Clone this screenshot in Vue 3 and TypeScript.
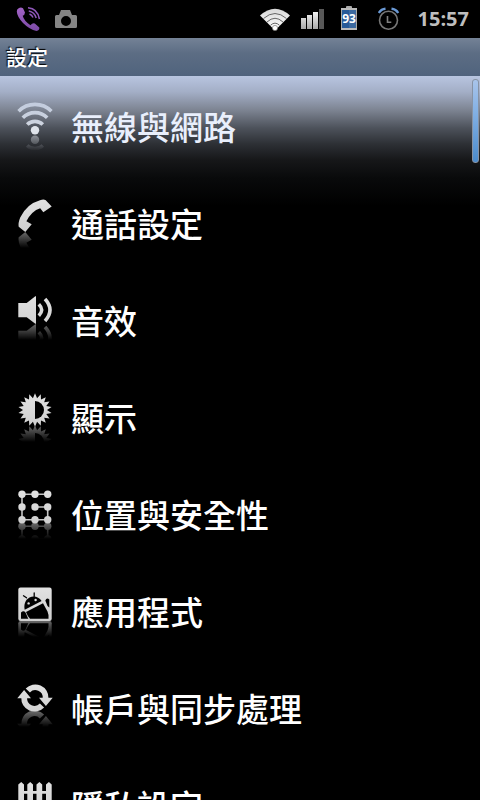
<script setup lang="ts">
interface SettingItem {
  icon: string
  label: string
  mirror: number
}

const items: SettingItem[] = [
  { icon: 'wireless', label: '無線與網路', mirror: 35 },
  { icon: 'call', label: '通話設定', mirror: 35 },
  { icon: 'sound', label: '音效', mirror: 30 },
  { icon: 'display', label: '顯示', mirror: 35 },
  { icon: 'security', label: '位置與安全性', mirror: 35 },
  { icon: 'apps', label: '應用程式', mirror: 36 },
  { icon: 'sync', label: '帳戶與同步處理', mirror: 29 },
  { icon: 'privacy', label: '隱私設定', mirror: 36 },
]

// Sun outline: alternating outer and inner points around the centre.
const rays = 18
const sunPoints = Array.from({ length: rays * 2 }, (_, i) => {
  const r = i % 2 === 0 ? 16.8 : 12
  const a = (i * Math.PI) / rays - Math.PI / 2
  return `${(18 + r * Math.cos(a)).toFixed(2)},${(19 + r * Math.sin(a)).toFixed(2)}`
}).join(' ')
</script>

<template>
  <div class="screen">
    <svg class="defs" aria-hidden="true">
      <defs>
        <linearGradient id="metal" gradientUnits="userSpaceOnUse" x1="0" y1="2" x2="0" y2="36">
          <stop offset="0" stop-color="#e2e2e2" />
          <stop offset="1" stop-color="#cfcfcf" />
        </linearGradient>
        <linearGradient id="frost" gradientUnits="userSpaceOnUse" x1="0" y1="2" x2="0" y2="36">
          <stop offset="0" stop-color="#c2ccde" />
          <stop offset="1" stop-color="#d4d8e0" />
        </linearGradient>
        <symbol id="icon-wireless" viewBox="0 0 36 54">
          <g fill="none" stroke="url(#frost)" stroke-width="3.6">
            <path d="M1.6 11.2A23 23 0 0 1 34.4 11.2" />
            <path d="M5.8 17.8A17 17 0 0 1 30.2 17.8" />
            <path d="M10.2 24.6A11 11 0 0 1 25.8 24.6" />
          </g>
          <circle cx="18" cy="30.3" r="4.2" fill="#dfe3ea" />
        </symbol>
        <symbol id="icon-call" viewBox="0 0 36 54">
          <path fill="url(#metal)" d="M23 3.2Q26.5 2 28.5 3L34.7 9.6L26.3 15.3L23.2 11.2Q14.5 14 9.4 24.3L14.7 27.3L8.3 35L1.7 29.7Q1 26 3.2 20.5Q9.5 7 23 3.2Z" />
        </symbol>
        <symbol id="icon-sound" viewBox="0 0 36 54">
          <path fill="url(#metal)" d="M1.3 9H9.7L18.3 2.3H19V29.7H18.3L9.7 23.3H1.3Z" />
          <g fill="none" stroke="url(#metal)" stroke-width="3.5">
            <path d="M21.8 10.3Q27.5 16 21.8 21.7" />
            <path d="M28 5Q38 16 28 27" />
          </g>
        </symbol>
        <symbol id="icon-display" viewBox="0 0 36 54">
          <polygon :points="sunPoints" fill="url(#metal)" />
          <path d="M18 10A9 9 0 0 1 18 28Z" fill="#000" />
        </symbol>
        <symbol id="icon-security" viewBox="0 0 36 54">
          <path d="M30.7 6.3H5V31.7H30.7V19H18" fill="none" stroke="#c4c4c4" stroke-width="1.6" />
          <g fill="url(#metal)">
            <circle cx="5" cy="6.3" r="3.7" /><circle cx="18" cy="6.3" r="3.7" /><circle cx="30.7" cy="6.3" r="3.7" />
            <circle cx="5" cy="19" r="3.7" /><circle cx="18" cy="19" r="3.7" /><circle cx="30.7" cy="19" r="3.7" />
            <circle cx="5" cy="31.7" r="3.7" /><circle cx="18" cy="31.7" r="3.7" /><circle cx="30.7" cy="31.7" r="3.7" />
          </g>
        </symbol>
        <symbol id="icon-apps" viewBox="0 0 36 54">
          <rect x="1.3" y="2.6" width="33.4" height="33.4" rx="2.2" fill="url(#metal)" />
          <path d="M7.7 24.8C6.500 19.5 8.5 14.5 12.5 12.5C17 10.3 22 12 24.600 16Z" />
          <path d="M9.5 12.8L6.500 10.8M17.2 11.5V8" fill="none" stroke="#000" stroke-width="1.3" stroke-linecap="round" />
          <circle cx="11.6" cy="18.4" r="1.2" fill="#dcdcdc" /><circle cx="18.6" cy="15" r="1.2" fill="#dcdcdc" />
          <path d="M9 26.9L26 18.2L30.5 26.5Q32 30 31.5 33.7H13Q10.5 31 9 26.9Z" />
          <path d="M4 33.7V27.500Q6.5 25 8.5 27.5L11.3 33.7Z" />
          <path d="M28.300 15.5Q29.8 12.2 32.3 14.5V22.5L30.5 21Z" />
        </symbol>
        <symbol id="icon-sync" viewBox="0 0 36 54">
          <g fill="none" stroke="url(#metal)" stroke-width="5.8">
            <path d="M10.800 8.600A10.300 10.300 0 0 1 28.600 16.300" />
            <path d="M25 23.400A10.300 10.300 0 0 1 7.200 15.700" />
          </g>
          <path fill="url(#metal)" d="M22 15.8H35.7L28.9 24Z M.3 16.2H14L7.1 8Z" />
        </symbol>
        <symbol id="icon-privacy" viewBox="0 0 36 54">
          <path fill="url(#metal)" d="M1.3 36V5.5L4.2 3L7 5.5V36Z M10.3 36V5.5L13.2 3L16 5.5V36Z M19.5 36V5.5L22.4 3L25.2 5.5V36Z M29 36V5.5L31.9 3L34.7 5.5V36Z M2 12H34V14.7H2Z M2 26H34V29H2Z" />
        </symbol>
      </defs>
    </svg>

    <header class="status">
      <div class="group notices">
        <svg width="26" height="38" viewBox="0 0 26 38" aria-hidden="true">
          <defs>
            <linearGradient id="violet" x1="0" y1="0" x2="0" y2="1">
              <stop offset="0" stop-color="#a263c6" /><stop offset="1" stop-color="#7b4aa5" />
            </linearGradient>
          </defs>
          <path fill="url(#violet)" d="M1.2 9.5Q4 6.5 7 8.2L9 12.5Q8.8 15 6.7 15.8Q8 21 14.5 25.3Q16.5 22.7 18.8 23.6L23.3 27.5Q23.8 30 20.5 31Q13.5 29.5 7 23Q1 16.5.8 11.5Z" />
          <g fill="none" stroke="#9058ba" stroke-width="1.5">
            <path d="M12 7.8Q21.5 8.5 23.4 19" /><path d="M12.8 11Q18.5 12 20.2 18" /><path d="M13.5 14Q16 15 17 17.5" />
          </g>
        </svg>
        <svg width="24" height="38" viewBox="0 0 24 38" aria-hidden="true">
          <path fill="#858585" fill-rule="evenodd" d="M7 10H16L18 15H21.5Q23 15 23 16.5V26.5Q23 28 21.5 28H2.5Q1 28 1 26.5V16.5Q1 15 2.5 15H5ZM12 16A5 5 0 1 0 12 26A5 5 0 1 0 12 16Z" />
        </svg>
      </div>
      <div class="group">
        <svg width="30" height="38" viewBox="0 0 30 38" aria-hidden="true">
          <defs>
            <linearGradient id="white" x1="0" y1="0" x2="0" y2="1">
              <stop offset="0" stop-color="#d8d8d8" /><stop offset="1" stop-color="#fff" />
            </linearGradient>
          </defs>
          <path fill="url(#white)" d="M0 15.5Q15 2 30 15.5L15 30.5Z" />
          <g fill="none" stroke="#666" stroke-width="1">
            <path d="M3.5 18.5Q15 8.5 26.5 18.5" /><path d="M7 22Q15 14.5 23 22" /><path d="M10.5 25.3Q15 21 19.5 25.3" />
          </g>
          <circle cx="15" cy="28" r="2.6" fill="#fff" stroke="#555" stroke-width=".5" />
        </svg>
        <svg width="30" height="38" viewBox="0 0 30 38" aria-hidden="true">
          <defs>
            <linearGradient id="bar" x1="0" y1="0" x2="0" y2="1">
              <stop offset="0" stop-color="#f2f2f2" /><stop offset="1" stop-color="#a8a8a8" />
            </linearGradient>
          </defs>
          <path fill="url(#bar)" d="M1 18H6V29H1Z M7 15H12V29H7Z M13 12H18V29H13Z" />
          <path fill="#585858" d="M19 9H24V29H19Z" />
        </svg>
        <svg class="battery" width="28" height="38" viewBox="0 0 28 38">
          <rect x="6" y="6" width="6" height="3" rx="1" fill="#aaa" />
          <rect x="1.5" y="8.5" width="15" height="21" fill="#275a98" stroke="#a9a9a4" />
          <path d="M9 10H16V29H9Z" fill="#3c699f" />
          <path d="M1 9H17M1 29H17" stroke="#bbb" stroke-width="2" />
          <text x="9" y="23" text-anchor="middle">93</text>
        </svg>
        <svg width="30" height="38" viewBox="0 0 30 38" aria-hidden="true">
          <circle cx="10.5" cy="20.3" r="9" fill="none" stroke="#777" stroke-width="1.6" />
          <path d="M9.500 16V22.3H13.3" fill="none" stroke="#808080" stroke-width="1.6" />
          <path d="M.8 13Q3 9.200 7.5 8.8M13.5 8.8Q18 9.2 20.2 13" fill="none" stroke="#6998d4" stroke-width="2.4" />
        </svg>
        <time class="clock">15:57</time>
      </div>
    </header>

    <h1 class="title">設定</h1>

    <main class="list">
      <button v-for="(item, i) in items" :key="item.icon" type="button" class="row" :class="{ selected: i === 0 }">
        <svg class="icon" viewBox="0 0 36 54" aria-hidden="true">
          <defs>
            <linearGradient :id="`fade-${item.icon}`" gradientUnits="userSpaceOnUse" x1="0" :y1="item.mirror" x2="0" :y2="item.mirror + 16">
              <stop offset="0" stop-color="#fff" stop-opacity=".5" /><stop offset="1" stop-color="#fff" stop-opacity="0" />
            </linearGradient>
            <mask :id="`mask-${item.icon}`" maskUnits="userSpaceOnUse" x="0" y="0" width="36" height="54">
              <rect x="0" :y="item.mirror" width="36" height="18" :fill="`url(#fade-${item.icon})`" />
            </mask>
          </defs>
          <g :mask="`url(#mask-${item.icon})`">
            <use :href="`#icon-${item.icon}`" width="36" height="54" :transform="`matrix(1 0 0 -1 0 ${item.mirror * 2})`" />
          </g>
          <use :href="`#icon-${item.icon}`" width="36" height="54" />
        </svg>
        <span class="label">{{ item.label }}</span>
      </button>
      <div class="thumb"></div>
    </main>
  </div>
</template>

<style>
html,
body {
  background: #000;
}
</style>

<style scoped>
.screen {
  display: flex;
  flex-direction: column;
  height: 100vh;
  overflow: hidden;
  background: #000;
  color: #fff;
  font-family: "Noto Sans CJK TC", "Noto Sans", sans-serif;
}
.defs {
  position: absolute;
  width: 0;
  height: 0;
}
.status {
  display: flex;
  flex: none;
  justify-content: space-between;
  height: 38px;
  padding: 0 11px 0 16px;
}
.group {
  display: flex;
  align-items: center;
  gap: 10px;
}
.notices {
  gap: 12px;
}
.battery text {
  fill: #fff;
  font: bold 12px "Open Sans", sans-serif;
}
.clock {
  color: #bebebe;
  font: bold 20px/38px "Open Sans", sans-serif;
}
.title {
  flex: none;
  box-sizing: border-box;
  height: 38px;
  margin: 0;
  padding: 0 6px;
  background: linear-gradient(#748296, #5c6d84 40%, #50637d);
  font-size: 21px;
  font-weight: 500;
  line-height: 36px;
  text-shadow: -1px -1px 1px #000;
}
.list {
  position: relative;
  flex: 1;
  min-height: 0;
  overflow: hidden;
  background: linear-gradient(#b8c5e0, #a3aec6 16px, #7d8492 34px, #4d525b 52px, #2d3035 68px, #161719 84px, #090a0b 102px, #000 130px) no-repeat;
}
.row {
  display: flex;
  align-items: flex-start;
  gap: 18px;
  box-sizing: border-box;
  width: 100%;
  height: 97px;
  padding: 24px 17px 0;
  border: 0;
  background: none;
  color: #fff;
  font: inherit;
  text-align: left;
}
.icon {
  flex: none;
  width: 36px;
  height: 54px;
}
.label {
  font-size: 33px;
  font-weight: 500;
  line-height: 52px;
  white-space: nowrap;
}
.selected .label {
  color: #e9effc;
}
.thumb {
  position: absolute;
  top: 3px;
  right: 1px;
  box-sizing: border-box;
  width: 7px;
  height: 84px;
  border: 1px solid #8793a5;
  border-radius: 3px;
  background: linear-gradient(#a9c4ea, #82b0e4 40%, #4b8bcc);
}
</style>
